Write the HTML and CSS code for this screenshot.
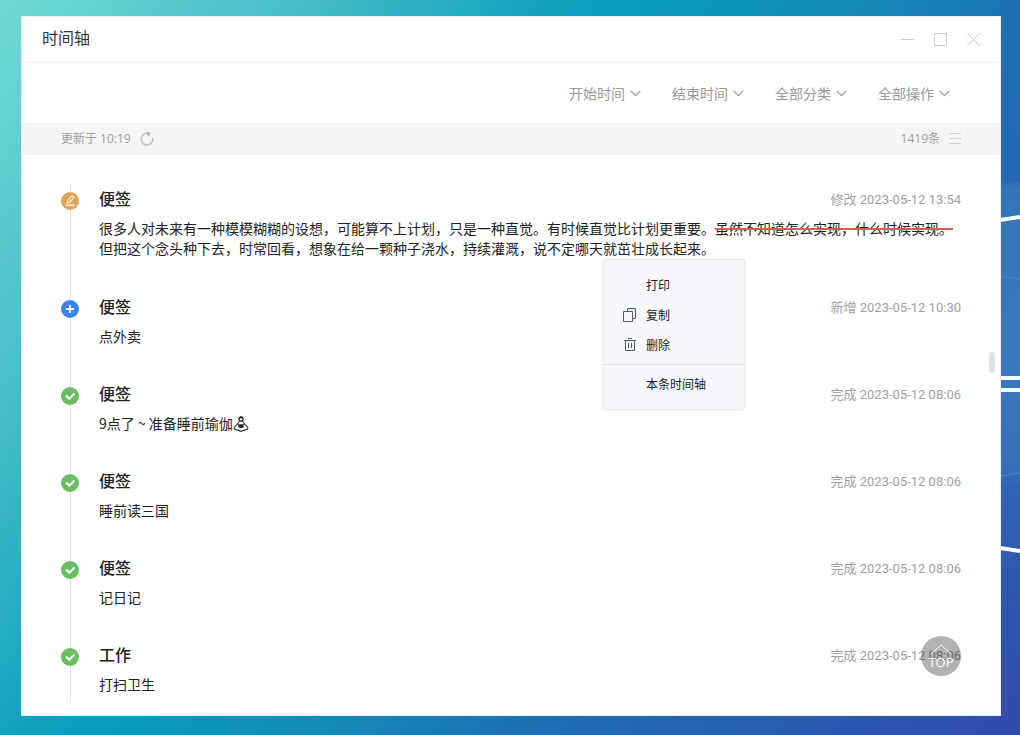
FILE: index.html
```html
<!DOCTYPE html>
<html lang="zh-CN">
<head>
<meta charset="utf-8">
<meta name="viewport" content="width=device-width, initial-scale=1">
<title>时间轴</title>
<link rel="stylesheet" href="styles.css">
</head>
<body class="desktop">
<svg class="streaks" viewBox="0 0 20 735" width="20" height="735" aria-hidden="true">
  <defs>
    <linearGradient id="side" x1="0" y1="0" x2="0" y2="1">
      <stop offset="0" stop-color="#1f70b3"/>
      <stop offset=".245" stop-color="#2169b4"/>
      <stop offset=".255" stop-color="#3475b8"/>
      <stop offset=".5" stop-color="#3c78bd"/>
      <stop offset=".64" stop-color="#386fba"/>
      <stop offset=".66" stop-color="#3064b4"/>
      <stop offset=".8" stop-color="#2d58ae"/>
      <stop offset="1" stop-color="#334bab"/>
    </linearGradient>
  </defs>
  <rect width="20" height="735" fill="url(#side)"/>
  <path d="M0 276l20 3M0 476l20-3" stroke="#4c88c6" stroke-width="1" fill="none"/>
  <path d="M0 220l20-3M0 548l20 3" stroke="#fff" stroke-width="4" fill="none"/>
  <path d="M0 378h20M0 390h20" stroke="#f4fcff" stroke-width="4" fill="none"/>
</svg>
<main class="window">
  <header class="titlebar">
    <h1 class="titlebar-name">时间轴</h1>
    <div class="controls">
      <button class="control" type="button" aria-label="最小化"><svg width="13" height="13" viewBox="0 0 13 13"><path d="M0 6.500h13"/></svg></button>
      <button class="control" type="button" aria-label="最大化"><svg width="13" height="13" viewBox="0 0 13 13"><path d="M.5.5h12v12H.5z"/></svg></button>
      <button class="control" type="button" aria-label="关闭"><svg width="13" height="13" viewBox="0 0 13 13"><path d="M.3.3l12.400 12.400M12.700.3L.3 12.700"/></svg></button>
    </div>
  </header>

  <form class="filters">
    <div class="filter"><select class="filter-select" aria-label="开始时间"><option>开始时间</option></select><svg class="chevron" width="11" height="7" viewBox="0 0 11 7"><path d="M.7.9l4.800 4.800L10.300.9"/></svg></div>
    <div class="filter"><select class="filter-select" aria-label="结束时间"><option>结束时间</option></select><svg class="chevron" width="11" height="7" viewBox="0 0 11 7"><path d="M.7.9l4.800 4.800L10.300.9"/></svg></div>
    <div class="filter"><select class="filter-select" aria-label="分类"><option>全部分类</option></select><svg class="chevron" width="11" height="7" viewBox="0 0 11 7"><path d="M.7.9l4.800 4.800L10.300.9"/></svg></div>
    <div class="filter"><select class="filter-select" aria-label="操作"><option>全部操作</option></select><svg class="chevron" width="11" height="7" viewBox="0 0 11 7"><path d="M.7.9l4.800 4.800L10.300.9"/></svg></div>
  </form>

  <div class="status">
    <span>更新于 10:19</span>
    <button class="status-button" type="button" aria-label="刷新"><svg width="14" height="14" viewBox="0 0 14 14"><path d="M12.600 5.400A5.900 5.900 0 1 1 7.600 1.300" fill="none" stroke="#c6c6c6" stroke-width="1.700"/><path d="M6 .2L10.800.6 8.600 4.400z" fill="#aaa"/></svg></button>
    <span class="status-count">1419条</span>
    <button class="status-button" type="button" aria-label="列表"><svg width="12" height="12" viewBox="0 0 12 12"><path d="M0 .5h12M0 5.500h12M0 10.500h12" stroke="#d3d3d3" fill="none"/></svg></button>
  </div>

  <ol class="timeline">
    <li class="entry entry-long">
      <svg class="marker" width="18" height="18" viewBox="0 0 18 18"><circle cx="9" cy="9" r="9" fill="#dea355"/><path d="M6 11l.5-2.300 4.300-4.500q.5-.5 1 0l.8.800q.5.5 0 1L8.300 10.500z" fill="none" stroke="#fff1dc" stroke-width="1.200"/><path d="M4.500 13.300h9" stroke="#fff1dc" stroke-width="1.500"/></svg>
      <div class="entry-main">
        <h2 class="entry-title">便签</h2>
        <p class="entry-text">很多人对未来有一种模模糊糊的设想，可能算不上计划，只是一种直觉。有时候直觉比计划更重要。<del class="struck">虽然不知道怎么实现，什么时候实现。</del><br>但把这个念头种下去，时常回看，想象在给一颗种子浇水，持续灌溉，说不定哪天就茁壮成长起来。</p>
      </div>
      <time class="entry-time">修改 2023-05-12 13:54</time>
    </li>
    <li class="entry">
      <svg class="marker" width="18" height="18" viewBox="0 0 18 18"><circle cx="9" cy="9" r="9" fill="#3984f5"/><path d="M9 5v8M5 9h8" stroke="#fff" stroke-width="1.800"/></svg>
      <div class="entry-main">
        <h2 class="entry-title">便签</h2>
        <p class="entry-text">点外卖</p>
      </div>
      <time class="entry-time">新增 2023-05-12 10:30</time>
    </li>
    <li class="entry">
      <svg class="marker" width="18" height="18" viewBox="0 0 18 18"><circle cx="9" cy="9" r="9" fill="#6abd63"/><path d="M5 8.400l3.300 3.300 5.200-5.200" fill="none" stroke="#fff" stroke-width="2.100"/></svg>
      <div class="entry-main">
        <h2 class="entry-title">便签</h2>
        <p class="entry-text">9点了 ~ 准备睡前瑜伽<svg class="yoga" width="16" height="16" viewBox="0 0 16 16" role="img" aria-label="瑜伽"><circle cx="8" cy="3" r="2.100" fill="#fff" stroke="#222" stroke-width="1.200"/><path d="M6 3Q6 .5 8 .5T10 3Q8 1.400 6 3z" fill="#222"/><path d="M6.500 5.200L5 7.500 1.400 11.200Q.6 13 2.500 13.400L8 15.300l5.500-1.900q1.900-.4 1.100-2.200L11 7.500 9.500 5.200z" fill="#fff" stroke="#333" stroke-width="1.100"/><path d="M4.600 8.200h6.800L10.300 10 11 11 8 12.200 5 11 5.700 10z" fill="#222"/></svg></p>
      </div>
      <time class="entry-time">完成 2023-05-12 08:06</time>
    </li>
    <li class="entry">
      <svg class="marker" width="18" height="18" viewBox="0 0 18 18"><circle cx="9" cy="9" r="9" fill="#6abd63"/><path d="M5 8.400l3.300 3.300 5.200-5.200" fill="none" stroke="#fff" stroke-width="2.100"/></svg>
      <div class="entry-main">
        <h2 class="entry-title">便签</h2>
        <p class="entry-text">睡前读三国</p>
      </div>
      <time class="entry-time">完成 2023-05-12 08:06</time>
    </li>
    <li class="entry">
      <svg class="marker" width="18" height="18" viewBox="0 0 18 18"><circle cx="9" cy="9" r="9" fill="#6abd63"/><path d="M5 8.400l3.300 3.300 5.200-5.200" fill="none" stroke="#fff" stroke-width="2.100"/></svg>
      <div class="entry-main">
        <h2 class="entry-title">便签</h2>
        <p class="entry-text">记日记</p>
      </div>
      <time class="entry-time">完成 2023-05-12 08:06</time>
    </li>
    <li class="entry">
      <svg class="marker" width="18" height="18" viewBox="0 0 18 18"><circle cx="9" cy="9" r="9" fill="#6abd63"/><path d="M5 8.400l3.300 3.300 5.200-5.200" fill="none" stroke="#fff" stroke-width="2.100"/></svg>
      <div class="entry-main">
        <h2 class="entry-title">工作</h2>
        <p class="entry-text">打扫卫生</p>
      </div>
      <time class="entry-time">完成 2023-05-12 08:06</time>
    </li>
  </ol>

  <div class="scroll-thumb"></div>

  <div class="menu" role="menu">
    <button class="menu-item" type="button" role="menuitem"><span class="menu-icon"></span>打印</button>
    <button class="menu-item" type="button" role="menuitem"><svg class="menu-icon" viewBox="0 0 14 14"><path d="M.5 3.500h9v10h-9zM4.500 3.500v-3h8v10h-3"/></svg>复制</button>
    <button class="menu-item" type="button" role="menuitem"><svg class="menu-icon" viewBox="0 0 14 14"><path d="M1 2.500h12M5 .5h4M2.500 2.500v10h9v-10M5.500 5v5M8.500 5v5"/></svg>删除</button>
    <hr class="menu-line">
    <button class="menu-item" type="button" role="menuitem"><span class="menu-icon"></span>本条时间轴</button>
  </div>

  <button class="to-top" type="button"><svg width="20" height="10" viewBox="0 0 20 10" aria-hidden="true"><path d="M.5 9.500L10 1l9.500 8.500" fill="none" stroke="#fff" stroke-width="1"/></svg>TOP</button>
</main>
</body>
</html>
```

FILE: styles.css
```css
* {
  box-sizing: border-box;
}

.desktop {
  display: flex;
  position: relative;
  margin: 0;
  min-height: 100vh;
  padding: 16px 19px 19px 21px;
  font-family: "Noto Sans CJK SC", sans-serif;
  font-size: 14px;
  line-height: 20px;
  color: #222;
  background: linear-gradient(126deg, #72dad3 0%, #40b9c7 22%, #14a3be 35%, #069bbe 41%, #1787b8 57%, #1f6cb4 70%, #334bab 100%);
}

.streaks {
  position: absolute;
  top: 0;
  right: 0;
}

.window {
  position: relative;
  flex: 1;
  display: flex;
  flex-direction: column;
  min-width: 0;
  background: #fff;
  border: 1px solid #eee;
}

button {
  padding: 0;
  border: 0;
  background: none;
  font: inherit;
  color: inherit;
}

.titlebar {
  display: flex;
  align-items: flex-start;
  justify-content: space-between;
  padding: 9px 20px 13px;
  border-bottom: 1px solid #eee;
}

.titlebar-name {
  margin: 0;
  font-size: 16px;
  line-height: 23px;
  font-weight: 400;
  color: #333;
}

.controls {
  display: flex;
  gap: 20px;
  padding-top: 7px;
}

.control {
  display: flex;
}

.control path {
  fill: none;
  stroke: #ccc;
}

.filters {
  display: flex;
  justify-content: flex-end;
  gap: 31px;
  padding: 20px 50px;
}

.filter {
  display: grid;
  align-items: center;
}

.filter-select {
  grid-area: 1 / 1;
  appearance: none;
  padding: 0 16px 0 0;
  border: 0;
  background: none;
  font: inherit;
  color: #999;
}

.chevron {
  grid-area: 1 / 1;
  justify-self: end;
  pointer-events: none;
  fill: none;
  stroke: #999;
  stroke-width: 1.3;
}

.status {
  display: flex;
  align-items: center;
  gap: 9px;
  padding: 6px 39px;
  background: #f5f5f5;
  font-family: "Open Sans", "Noto Sans CJK SC", sans-serif;
  font-size: 12px;
  color: #a0a0a0;
}

.status-button {
  display: flex;
}

.status-count {
  margin-left: auto;
}

.timeline {
  flex: 1;
  margin: 30px 39px 14px;
  padding: 1px 0 0;
  list-style: none;
  background: linear-gradient(#e2e2e2, #e2e2e2) 9px 0 / 1px 100% no-repeat;
}

.entry {
  display: flex;
  position: relative;
  gap: 20px;
  padding-bottom: 35px;
}

.entry-long {
  padding-bottom: 36px;
}

.entry:last-child {
  padding-bottom: 0;
}

.marker {
  flex: none;
  margin-top: 6px;
}

.entry-main {
  flex: 1;
}

.entry-title {
  margin: 0 0 8px;
  font-size: 16px;
  line-height: 24px;
  font-weight: 500;
}

.entry-text {
  margin: 0;
}

.struck {
  text-decoration: line-through 2px #d5604c;
}

.yoga {
  vertical-align: -3px;
}

.entry-time {
  position: absolute;
  top: 4px;
  right: 0;
  font-family: Roboto, "Noto Sans CJK SC", sans-serif;
  font-size: 13px;
  color: #a0a0a0;
}

.scroll-thumb {
  position: absolute;
  top: 335px;
  right: 5px;
  width: 6px;
  height: 21px;
  border-radius: 3px;
  background: #e1e1e1;
}

.menu {
  position: absolute;
  top: 243px;
  left: 582px;
  width: 140px;
  padding: 10px 0;
  background: #f6f8fb;
  border-radius: 2px;
  box-shadow: 0 0 3px rgba(0, 0, 0, .25);
  font-size: 12px;
}

.menu-item {
  display: flex;
  align-items: center;
  gap: 9px;
  width: 100%;
  height: 30px;
  padding: 0 19px;
}

.menu-icon {
  width: 14px;
  height: 14px;
  fill: none;
  stroke: #555c62;
}

.menu-line {
  margin: 4px 0;
  border: 0;
  border-top: 1px solid #dfe1e4;
}

.to-top {
  position: absolute;
  right: 39px;
  bottom: 39px;
  display: flex;
  flex-direction: column;
  align-items: center;
  width: 40px;
  height: 40px;
  padding-top: 8px;
  border-radius: 50%;
  background: rgba(0, 0, 0, .3);
  color: #fff;
  font-family: "Open Sans", sans-serif;
  font-size: 13px;
  line-height: 16px;
}
```
